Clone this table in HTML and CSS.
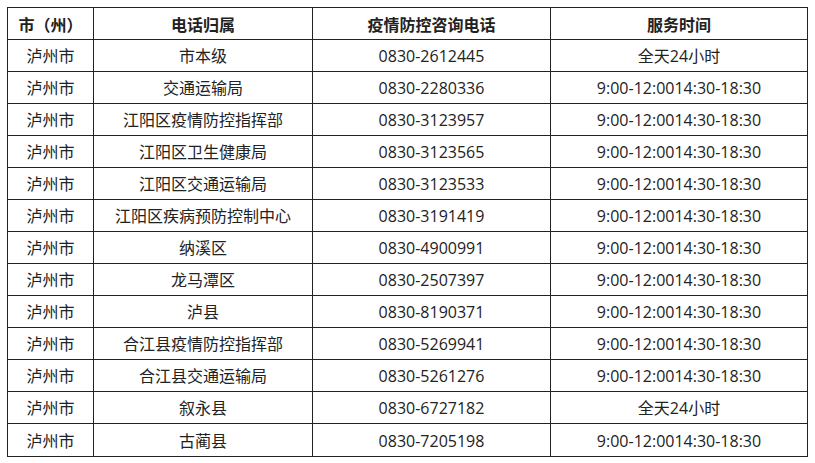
FILE: index.html
```html
<!DOCTYPE html>
<html lang="zh-CN">
<head>
<meta charset="utf-8">
<title>泸州市疫情防控咨询电话</title>
<link rel="stylesheet" href="styles.css">
</head>
<body>
<div class="page">
<table class="phones">
<colgroup>
<col class="c1"><col class="c2"><col class="c3"><col class="c4">
</colgroup>
<thead>
<tr><th>市（州）</th><th>电话归属</th><th>疫情防控咨询电话</th><th>服务时间</th></tr>
</thead>
<tbody>
<tr><td>泸州市</td><td>市本级</td><td>0830-2612445</td><td>全天24小时</td></tr>
<tr><td>泸州市</td><td>交通运输局</td><td>0830-2280336</td><td>9:00-12:0014:30-18:30</td></tr>
<tr><td>泸州市</td><td>江阳区疫情防控指挥部</td><td>0830-3123957</td><td>9:00-12:0014:30-18:30</td></tr>
<tr><td>泸州市</td><td>江阳区卫生健康局</td><td>0830-3123565</td><td>9:00-12:0014:30-18:30</td></tr>
<tr><td>泸州市</td><td>江阳区交通运输局</td><td>0830-3123533</td><td>9:00-12:0014:30-18:30</td></tr>
<tr><td>泸州市</td><td>江阳区疾病预防控制中心</td><td>0830-3191419</td><td>9:00-12:0014:30-18:30</td></tr>
<tr><td>泸州市</td><td>纳溪区</td><td>0830-4900991</td><td>9:00-12:0014:30-18:30</td></tr>
<tr><td>泸州市</td><td>龙马潭区</td><td>0830-2507397</td><td>9:00-12:0014:30-18:30</td></tr>
<tr><td>泸州市</td><td>泸县</td><td>0830-8190371</td><td>9:00-12:0014:30-18:30</td></tr>
<tr><td>泸州市</td><td>合江县疫情防控指挥部</td><td>0830-5269941</td><td>9:00-12:0014:30-18:30</td></tr>
<tr><td>泸州市</td><td>合江县交通运输局</td><td>0830-5261276</td><td>9:00-12:0014:30-18:30</td></tr>
<tr><td>泸州市</td><td>叙永县</td><td>0830-6727182</td><td>全天24小时</td></tr>
<tr class="last"><td>泸州市</td><td>古蔺县</td><td>0830-7205198</td><td>9:00-12:0014:30-18:30</td></tr>
</tbody>
</table>
</div>
</body>
</html>
```

FILE: styles.css
```css
html, body {
  margin: 0;
  padding: 0;
  background: #ffffff;
}

.page {
  padding: 7px 0 0 7px;
}

.phones {
  border-collapse: collapse;
  table-layout: fixed;
  width: 800px;
  font-family: "Open Sans", "Noto Sans CJK SC", sans-serif;
  font-size: 16px;
  color: #222222;
}

.phones .c1 { width: 86px; }
.phones .c2 { width: 219px; }
.phones .c3 { width: 238px; }
.phones .c4 { width: 257px; }

.phones th,
.phones td {
  border: 1px solid #222222;
  height: 31px;
  padding: 1px 0 0 0;
  box-sizing: border-box;
  text-align: center;
  vertical-align: middle;
  line-height: 20px;
  white-space: nowrap;
}

.phones th {
  height: 32px;
  padding-top: 2px;
  font-weight: bold;
}

.phones td {
  height: 32px;
}

.phones .last td {
  height: 33px;
}
```
